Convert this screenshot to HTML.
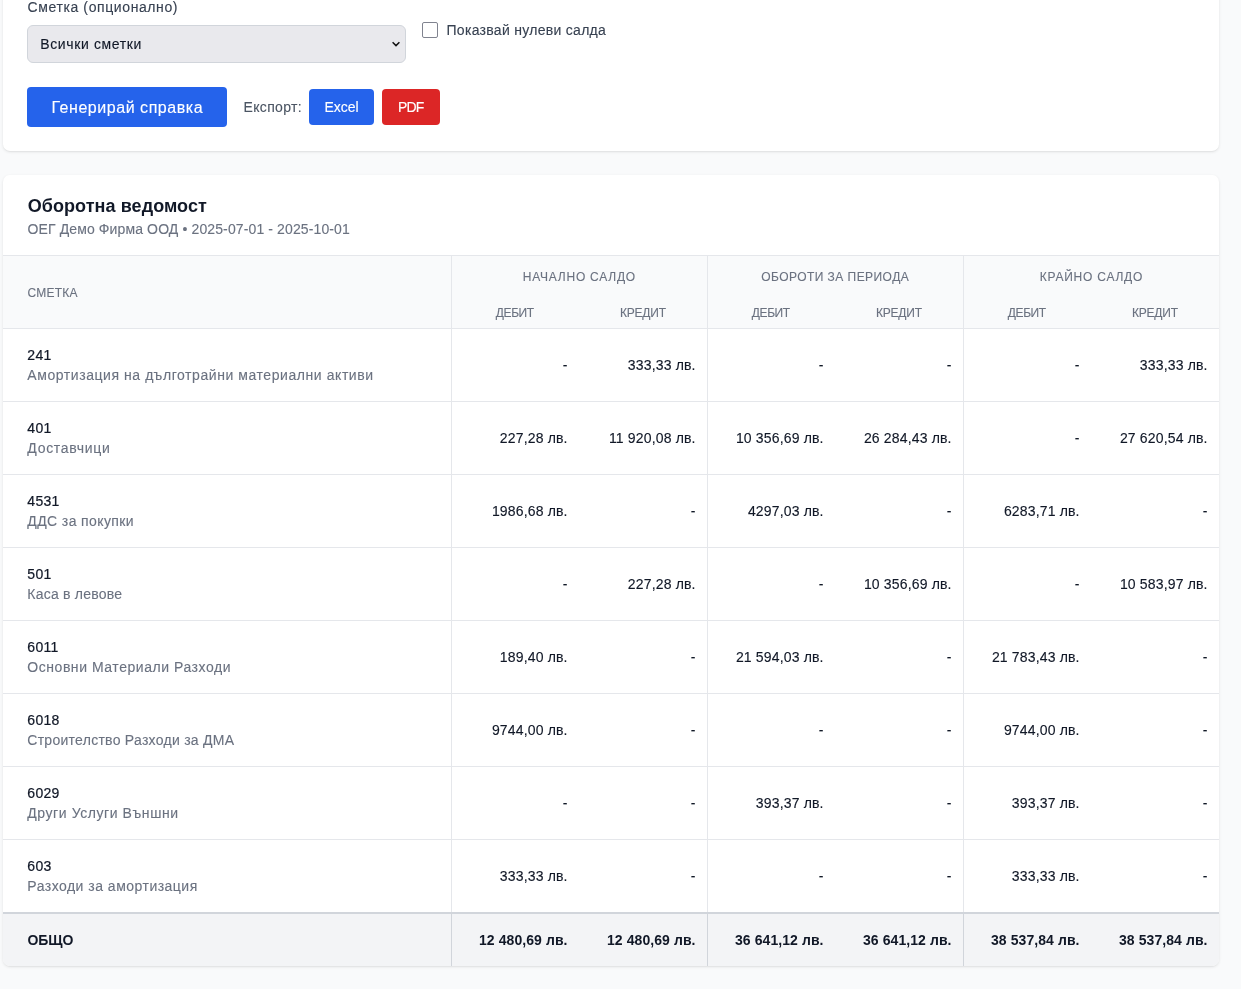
<!DOCTYPE html>
<html><head><meta charset="utf-8"><style>
html,body{margin:0;padding:0;width:1241px;height:989px;overflow:hidden;background:#f9fafb;}
body{position:relative;font-family:"Liberation Sans",sans-serif;}
#root{position:absolute;left:0;top:0;width:1241px;height:989px;will-change:transform;}
.t{position:absolute;white-space:nowrap;-webkit-text-stroke:0.12px currentColor;}
.card{position:absolute;background:#fff;border-radius:7px;box-shadow:0 1px 3px 0 rgba(0,0,0,.1),0 1px 2px -1px rgba(0,0,0,.1);}
</style></head><body><div id="root">
<div class="card" style="left:3px;top:-60px;width:1216px;height:211px"></div>
<div class="t" style="left:27.60px;top:-1.75px;font-size:14px;line-height:18px;font-weight:400;color:#374151;letter-spacing:0.6px;">Сметка (опционално)</div>
<div style="position:absolute;left:27px;top:25px;width:377px;height:36px;border:1px solid #d1d5db;border-radius:6px;background:#e9e9ed"></div>
<div class="t" style="left:40.30px;top:34.95px;font-size:14px;line-height:18px;font-weight:400;color:#111827;letter-spacing:0.62px;">Всички сметки</div>
<svg style="position:absolute;left:388px;top:38px" width="16" height="12" viewBox="0 0 16 12"><path d="M4.6 4.3 L8 7.6 L11.4 4.3" fill="none" stroke="#111" stroke-width="1.5"/></svg>
<div style="position:absolute;left:422px;top:22px;width:14px;height:14px;border:1px solid #80838f;border-radius:2px;background:#fff"></div>
<div class="t" style="left:446.50px;top:20.95px;font-size:14px;line-height:18px;font-weight:400;color:#374151;letter-spacing:0.29px;">Показвай нулеви салда</div>
<div style="position:absolute;left:27px;top:87px;width:200px;height:40px;border-radius:4px;background:#2563eb"></div>
<div class="t" style="left:-172.73px;width:600px;text-align:center;top:98.16px;font-size:16px;line-height:20px;font-weight:400;color:#ffffff;letter-spacing:0.54px;">Генерирай справка</div>
<div class="t" style="left:243.60px;top:98.05px;font-size:14px;line-height:18px;font-weight:400;color:#4b5563;letter-spacing:0.33px;">Експорт:</div>
<div style="position:absolute;left:309px;top:89px;width:65px;height:36px;border-radius:4px;background:#2563eb"></div>
<div class="t" style="left:41.50px;width:600px;text-align:center;top:98.05px;font-size:14px;line-height:18px;font-weight:400;color:#ffffff;letter-spacing:0px;">Excel</div>
<div style="position:absolute;left:382px;top:89px;width:58px;height:36px;border-radius:4px;background:#dc2626"></div>
<div class="t" style="left:110.80px;width:600px;text-align:center;top:98.05px;font-size:14px;line-height:18px;font-weight:400;color:#ffffff;letter-spacing:-0.8px;">PDF</div>
<div class="card" style="left:3px;top:175px;width:1216px;height:791px;overflow:hidden">
<div class="t" style="left:24.70px;top:19.66px;font-size:18px;line-height:22px;font-weight:700;color:#111827;letter-spacing:0.07px;-webkit-text-stroke:0;">Оборотна ведомост</div>
<div class="t" style="left:24.50px;top:44.85px;font-size:14px;line-height:18px;font-weight:400;color:#6b7280;letter-spacing:0.12px;">ОЕГ Демо Фирма ООД • 2025-07-01 - 2025-10-01</div>
<div style="position:absolute;left:0px;top:80px;width:1216px;height:1px;background:#e5e7eb"></div>
<div style="position:absolute;left:0px;top:81px;width:1216px;height:72px;background:#f9fafb"></div>
<div style="position:absolute;left:0px;top:153px;width:1216px;height:1px;background:#e5e7eb"></div>
<div class="t" style="left:24.60px;top:110.54px;font-size:12px;line-height:15px;font-weight:400;color:#6b7280;letter-spacing:0.22px;">СМЕТКА</div>
<div class="t" style="left:276.38px;width:600px;text-align:center;top:94.54px;font-size:12px;line-height:15px;font-weight:400;color:#6b7280;letter-spacing:0.76px;">НАЧАЛНО САЛДО</div>
<div class="t" style="left:211.80px;width:600px;text-align:center;top:130.64px;font-size:12px;line-height:15px;font-weight:400;color:#6b7280;letter-spacing:-0.4px;">ДЕБИТ</div>
<div class="t" style="left:339.91px;width:600px;text-align:center;top:130.64px;font-size:12px;line-height:15px;font-weight:400;color:#6b7280;letter-spacing:-0.18px;">КРЕДИТ</div>
<div class="t" style="left:532.23px;width:600px;text-align:center;top:94.54px;font-size:12px;line-height:15px;font-weight:400;color:#6b7280;letter-spacing:0.45px;">ОБОРОТИ ЗА ПЕРИОДА</div>
<div class="t" style="left:467.80px;width:600px;text-align:center;top:130.64px;font-size:12px;line-height:15px;font-weight:400;color:#6b7280;letter-spacing:-0.4px;">ДЕБИТ</div>
<div class="t" style="left:595.91px;width:600px;text-align:center;top:130.64px;font-size:12px;line-height:15px;font-weight:400;color:#6b7280;letter-spacing:-0.18px;">КРЕДИТ</div>
<div class="t" style="left:788.38px;width:600px;text-align:center;top:94.54px;font-size:12px;line-height:15px;font-weight:400;color:#6b7280;letter-spacing:0.77px;">КРАЙНО САЛДО</div>
<div class="t" style="left:723.80px;width:600px;text-align:center;top:130.64px;font-size:12px;line-height:15px;font-weight:400;color:#6b7280;letter-spacing:-0.4px;">ДЕБИТ</div>
<div class="t" style="left:851.91px;width:600px;text-align:center;top:130.64px;font-size:12px;line-height:15px;font-weight:400;color:#6b7280;letter-spacing:-0.18px;">КРЕДИТ</div>
<div class="t" style="left:24.30px;top:171.05px;font-size:14px;line-height:18px;font-weight:400;color:#111827;letter-spacing:0.3px;-webkit-text-stroke:0.22px #111827">241</div>
<div class="t" style="left:24.30px;top:191.15px;font-size:14px;line-height:18px;font-weight:400;color:#6b7280;letter-spacing:0.567px;">Амортизация на дълготрайни материални активи</div>
<div class="t" style="right:651.50px;top:181.15px;font-size:14px;line-height:18px;font-weight:400;color:#111827;letter-spacing:0px;">-</div>
<div class="t" style="right:523.34px;top:181.15px;font-size:14px;line-height:18px;font-weight:400;color:#111827;letter-spacing:0.16px;">333,33 лв.</div>
<div class="t" style="right:395.50px;top:181.15px;font-size:14px;line-height:18px;font-weight:400;color:#111827;letter-spacing:0px;">-</div>
<div class="t" style="right:267.50px;top:181.15px;font-size:14px;line-height:18px;font-weight:400;color:#111827;letter-spacing:0px;">-</div>
<div class="t" style="right:139.50px;top:181.15px;font-size:14px;line-height:18px;font-weight:400;color:#111827;letter-spacing:0px;">-</div>
<div class="t" style="right:11.34px;top:181.15px;font-size:14px;line-height:18px;font-weight:400;color:#111827;letter-spacing:0.16px;">333,33 лв.</div>
<div style="position:absolute;left:0px;top:226px;width:1216px;height:1px;background:#e5e7eb"></div>
<div class="t" style="left:24.30px;top:244.05px;font-size:14px;line-height:18px;font-weight:400;color:#111827;letter-spacing:0.3px;-webkit-text-stroke:0.22px #111827">401</div>
<div class="t" style="left:24.30px;top:264.15px;font-size:14px;line-height:18px;font-weight:400;color:#6b7280;letter-spacing:0.711px;">Доставчици</div>
<div class="t" style="right:651.34px;top:254.15px;font-size:14px;line-height:18px;font-weight:400;color:#111827;letter-spacing:0.16px;">227,28 лв.</div>
<div class="t" style="right:523.34px;top:254.15px;font-size:14px;line-height:18px;font-weight:400;color:#111827;letter-spacing:0.16px;">11 920,08 лв.</div>
<div class="t" style="right:395.34px;top:254.15px;font-size:14px;line-height:18px;font-weight:400;color:#111827;letter-spacing:0.16px;">10 356,69 лв.</div>
<div class="t" style="right:267.34px;top:254.15px;font-size:14px;line-height:18px;font-weight:400;color:#111827;letter-spacing:0.16px;">26 284,43 лв.</div>
<div class="t" style="right:139.50px;top:254.15px;font-size:14px;line-height:18px;font-weight:400;color:#111827;letter-spacing:0px;">-</div>
<div class="t" style="right:11.34px;top:254.15px;font-size:14px;line-height:18px;font-weight:400;color:#111827;letter-spacing:0.16px;">27 620,54 лв.</div>
<div style="position:absolute;left:0px;top:299px;width:1216px;height:1px;background:#e5e7eb"></div>
<div class="t" style="left:24.30px;top:317.05px;font-size:14px;line-height:18px;font-weight:400;color:#111827;letter-spacing:0.3px;-webkit-text-stroke:0.22px #111827">4531</div>
<div class="t" style="left:24.30px;top:337.15px;font-size:14px;line-height:18px;font-weight:400;color:#6b7280;letter-spacing:0.392px;">ДДС за покупки</div>
<div class="t" style="right:651.34px;top:327.15px;font-size:14px;line-height:18px;font-weight:400;color:#111827;letter-spacing:0.16px;">1986,68 лв.</div>
<div class="t" style="right:523.50px;top:327.15px;font-size:14px;line-height:18px;font-weight:400;color:#111827;letter-spacing:0px;">-</div>
<div class="t" style="right:395.34px;top:327.15px;font-size:14px;line-height:18px;font-weight:400;color:#111827;letter-spacing:0.16px;">4297,03 лв.</div>
<div class="t" style="right:267.50px;top:327.15px;font-size:14px;line-height:18px;font-weight:400;color:#111827;letter-spacing:0px;">-</div>
<div class="t" style="right:139.34px;top:327.15px;font-size:14px;line-height:18px;font-weight:400;color:#111827;letter-spacing:0.16px;">6283,71 лв.</div>
<div class="t" style="right:11.50px;top:327.15px;font-size:14px;line-height:18px;font-weight:400;color:#111827;letter-spacing:0px;">-</div>
<div style="position:absolute;left:0px;top:372px;width:1216px;height:1px;background:#e5e7eb"></div>
<div class="t" style="left:24.30px;top:390.05px;font-size:14px;line-height:18px;font-weight:400;color:#111827;letter-spacing:0.3px;-webkit-text-stroke:0.22px #111827">501</div>
<div class="t" style="left:24.30px;top:410.15px;font-size:14px;line-height:18px;font-weight:400;color:#6b7280;letter-spacing:0.225px;">Каса в левове</div>
<div class="t" style="right:651.50px;top:400.15px;font-size:14px;line-height:18px;font-weight:400;color:#111827;letter-spacing:0px;">-</div>
<div class="t" style="right:523.34px;top:400.15px;font-size:14px;line-height:18px;font-weight:400;color:#111827;letter-spacing:0.16px;">227,28 лв.</div>
<div class="t" style="right:395.50px;top:400.15px;font-size:14px;line-height:18px;font-weight:400;color:#111827;letter-spacing:0px;">-</div>
<div class="t" style="right:267.34px;top:400.15px;font-size:14px;line-height:18px;font-weight:400;color:#111827;letter-spacing:0.16px;">10 356,69 лв.</div>
<div class="t" style="right:139.50px;top:400.15px;font-size:14px;line-height:18px;font-weight:400;color:#111827;letter-spacing:0px;">-</div>
<div class="t" style="right:11.34px;top:400.15px;font-size:14px;line-height:18px;font-weight:400;color:#111827;letter-spacing:0.16px;">10 583,97 лв.</div>
<div style="position:absolute;left:0px;top:445px;width:1216px;height:1px;background:#e5e7eb"></div>
<div class="t" style="left:24.30px;top:463.05px;font-size:14px;line-height:18px;font-weight:400;color:#111827;letter-spacing:0.3px;-webkit-text-stroke:0.22px #111827">6011</div>
<div class="t" style="left:24.30px;top:483.15px;font-size:14px;line-height:18px;font-weight:400;color:#6b7280;letter-spacing:0.546px;">Основни Материали Разходи</div>
<div class="t" style="right:651.34px;top:473.15px;font-size:14px;line-height:18px;font-weight:400;color:#111827;letter-spacing:0.16px;">189,40 лв.</div>
<div class="t" style="right:523.50px;top:473.15px;font-size:14px;line-height:18px;font-weight:400;color:#111827;letter-spacing:0px;">-</div>
<div class="t" style="right:395.34px;top:473.15px;font-size:14px;line-height:18px;font-weight:400;color:#111827;letter-spacing:0.16px;">21 594,03 лв.</div>
<div class="t" style="right:267.50px;top:473.15px;font-size:14px;line-height:18px;font-weight:400;color:#111827;letter-spacing:0px;">-</div>
<div class="t" style="right:139.34px;top:473.15px;font-size:14px;line-height:18px;font-weight:400;color:#111827;letter-spacing:0.16px;">21 783,43 лв.</div>
<div class="t" style="right:11.50px;top:473.15px;font-size:14px;line-height:18px;font-weight:400;color:#111827;letter-spacing:0px;">-</div>
<div style="position:absolute;left:0px;top:518px;width:1216px;height:1px;background:#e5e7eb"></div>
<div class="t" style="left:24.30px;top:536.05px;font-size:14px;line-height:18px;font-weight:400;color:#111827;letter-spacing:0.3px;-webkit-text-stroke:0.22px #111827">6018</div>
<div class="t" style="left:24.30px;top:556.15px;font-size:14px;line-height:18px;font-weight:400;color:#6b7280;letter-spacing:0.273px;">Строителство Разходи за ДМА</div>
<div class="t" style="right:651.34px;top:546.15px;font-size:14px;line-height:18px;font-weight:400;color:#111827;letter-spacing:0.16px;">9744,00 лв.</div>
<div class="t" style="right:523.50px;top:546.15px;font-size:14px;line-height:18px;font-weight:400;color:#111827;letter-spacing:0px;">-</div>
<div class="t" style="right:395.50px;top:546.15px;font-size:14px;line-height:18px;font-weight:400;color:#111827;letter-spacing:0px;">-</div>
<div class="t" style="right:267.50px;top:546.15px;font-size:14px;line-height:18px;font-weight:400;color:#111827;letter-spacing:0px;">-</div>
<div class="t" style="right:139.34px;top:546.15px;font-size:14px;line-height:18px;font-weight:400;color:#111827;letter-spacing:0.16px;">9744,00 лв.</div>
<div class="t" style="right:11.50px;top:546.15px;font-size:14px;line-height:18px;font-weight:400;color:#111827;letter-spacing:0px;">-</div>
<div style="position:absolute;left:0px;top:591px;width:1216px;height:1px;background:#e5e7eb"></div>
<div class="t" style="left:24.30px;top:609.05px;font-size:14px;line-height:18px;font-weight:400;color:#111827;letter-spacing:0.3px;-webkit-text-stroke:0.22px #111827">6029</div>
<div class="t" style="left:24.30px;top:629.15px;font-size:14px;line-height:18px;font-weight:400;color:#6b7280;letter-spacing:0.572px;">Други Услуги Външни</div>
<div class="t" style="right:651.50px;top:619.15px;font-size:14px;line-height:18px;font-weight:400;color:#111827;letter-spacing:0px;">-</div>
<div class="t" style="right:523.50px;top:619.15px;font-size:14px;line-height:18px;font-weight:400;color:#111827;letter-spacing:0px;">-</div>
<div class="t" style="right:395.34px;top:619.15px;font-size:14px;line-height:18px;font-weight:400;color:#111827;letter-spacing:0.16px;">393,37 лв.</div>
<div class="t" style="right:267.50px;top:619.15px;font-size:14px;line-height:18px;font-weight:400;color:#111827;letter-spacing:0px;">-</div>
<div class="t" style="right:139.34px;top:619.15px;font-size:14px;line-height:18px;font-weight:400;color:#111827;letter-spacing:0.16px;">393,37 лв.</div>
<div class="t" style="right:11.50px;top:619.15px;font-size:14px;line-height:18px;font-weight:400;color:#111827;letter-spacing:0px;">-</div>
<div style="position:absolute;left:0px;top:664px;width:1216px;height:1px;background:#e5e7eb"></div>
<div class="t" style="left:24.30px;top:682.05px;font-size:14px;line-height:18px;font-weight:400;color:#111827;letter-spacing:0.3px;-webkit-text-stroke:0.22px #111827">603</div>
<div class="t" style="left:24.30px;top:702.15px;font-size:14px;line-height:18px;font-weight:400;color:#6b7280;letter-spacing:0.486px;">Разходи за амортизация</div>
<div class="t" style="right:651.34px;top:692.15px;font-size:14px;line-height:18px;font-weight:400;color:#111827;letter-spacing:0.16px;">333,33 лв.</div>
<div class="t" style="right:523.50px;top:692.15px;font-size:14px;line-height:18px;font-weight:400;color:#111827;letter-spacing:0px;">-</div>
<div class="t" style="right:395.50px;top:692.15px;font-size:14px;line-height:18px;font-weight:400;color:#111827;letter-spacing:0px;">-</div>
<div class="t" style="right:267.50px;top:692.15px;font-size:14px;line-height:18px;font-weight:400;color:#111827;letter-spacing:0px;">-</div>
<div class="t" style="right:139.34px;top:692.15px;font-size:14px;line-height:18px;font-weight:400;color:#111827;letter-spacing:0.16px;">333,33 лв.</div>
<div class="t" style="right:11.50px;top:692.15px;font-size:14px;line-height:18px;font-weight:400;color:#111827;letter-spacing:0px;">-</div>
<div style="position:absolute;left:0px;top:737px;width:1216px;height:54px;background:#f3f4f6"></div>
<div style="position:absolute;left:0px;top:737px;width:1216px;height:2px;background:#d1d5db"></div>
<div class="t" style="left:24.40px;top:755.95px;font-size:14px;line-height:18px;font-weight:700;color:#111827;letter-spacing:0px;-webkit-text-stroke:0;">ОБЩО</div>
<div class="t" style="right:651.42px;top:755.95px;font-size:14px;line-height:18px;font-weight:700;color:#111827;letter-spacing:0.08px;-webkit-text-stroke:0;">12 480,69 лв.</div>
<div class="t" style="right:523.42px;top:755.95px;font-size:14px;line-height:18px;font-weight:700;color:#111827;letter-spacing:0.08px;-webkit-text-stroke:0;">12 480,69 лв.</div>
<div class="t" style="right:395.42px;top:755.95px;font-size:14px;line-height:18px;font-weight:700;color:#111827;letter-spacing:0.08px;-webkit-text-stroke:0;">36 641,12 лв.</div>
<div class="t" style="right:267.42px;top:755.95px;font-size:14px;line-height:18px;font-weight:700;color:#111827;letter-spacing:0.08px;-webkit-text-stroke:0;">36 641,12 лв.</div>
<div class="t" style="right:139.42px;top:755.95px;font-size:14px;line-height:18px;font-weight:700;color:#111827;letter-spacing:0.08px;-webkit-text-stroke:0;">38 537,84 лв.</div>
<div class="t" style="right:11.42px;top:755.95px;font-size:14px;line-height:18px;font-weight:700;color:#111827;letter-spacing:0.08px;-webkit-text-stroke:0;">38 537,84 лв.</div>
<div style="position:absolute;left:448px;top:81px;width:1px;height:656px;background:#e5e7eb"></div>
<div style="position:absolute;left:448px;top:739px;width:1px;height:52px;background:#d1d5db"></div>
<div style="position:absolute;left:704px;top:81px;width:1px;height:656px;background:#e5e7eb"></div>
<div style="position:absolute;left:704px;top:739px;width:1px;height:52px;background:#d1d5db"></div>
<div style="position:absolute;left:960px;top:81px;width:1px;height:656px;background:#e5e7eb"></div>
<div style="position:absolute;left:960px;top:739px;width:1px;height:52px;background:#d1d5db"></div>
</div>
</div></body></html>
